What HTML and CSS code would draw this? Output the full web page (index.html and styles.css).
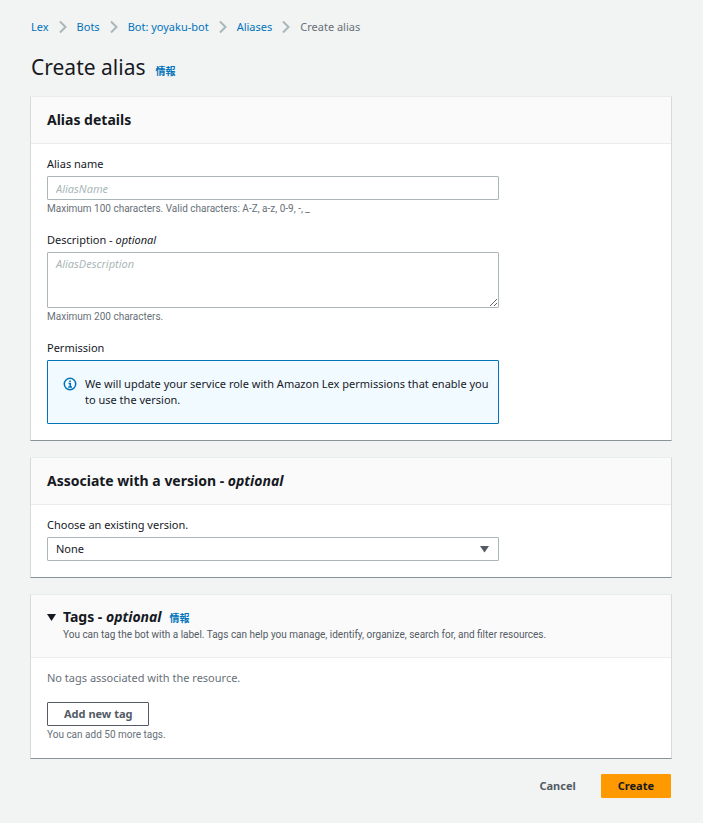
FILE: index.html
```html
<!DOCTYPE html>
<html lang="en">
<head>
<meta charset="utf-8">
<meta name="viewport" content="width=device-width, initial-scale=1">
<title>Create alias</title>
<link rel="stylesheet" href="styles.css">
</head>
<body>
<main class="page">
  <nav class="breadcrumbs" aria-label="Breadcrumbs">
    <a href="#">Lex</a>
    <svg class="chevron" viewBox="0 0 8 14"><path d="M1 1.5 6.5 7 1 12.500"/></svg>
    <a href="#">Bots</a>
    <svg class="chevron" viewBox="0 0 8 14"><path d="M1 1.5 6.5 7 1 12.500"/></svg>
    <a href="#">Bot: yoyaku-bot</a>
    <svg class="chevron" viewBox="0 0 8 14"><path d="M1 1.5 6.5 7 1 12.500"/></svg>
    <a href="#">Aliases</a>
    <svg class="chevron" viewBox="0 0 8 14"><path d="M1 1.5 6.5 7 1 12.500"/></svg>
    <span class="current">Create alias</span>
  </nav>

  <header class="page-title">
    <h1>Create alias</h1>
    <a class="info" href="#" lang="ja">情報</a>
  </header>

  <form class="form">
    <section class="card">
      <div class="card-header"><h2>Alias details</h2></div>
      <div class="card-body">
        <div class="field">
          <label for="alias-name">Alias name</label>
          <input class="control" id="alias-name" type="text" placeholder="AliasName">
          <p class="hint">Maximum 100 characters. Valid characters: A-Z, a-z, 0-9, -, _</p>
        </div>
        <div class="field">
          <label for="description">Description - <em>optional</em></label>
          <textarea class="control area" id="description" placeholder="AliasDescription"></textarea>
          <p class="hint">Maximum 200 characters.</p>
        </div>
        <div class="field">
          <span class="label">Permission</span>
          <div class="alert">
            <svg class="alert-icon" viewBox="0 0 14 14"><circle cx="7" cy="7" r="5.700"/><path d="M5.500 6.500H7.300V9.700M5.200 9.900H9M6.200 4.200H7.800"/></svg>
            <p>We will update your service role with Amazon Lex permissions that enable you to use the version.</p>
          </div>
        </div>
      </div>
    </section>

    <section class="card">
      <div class="card-header"><h2>Associate with a version - <em>optional</em></h2></div>
      <div class="card-body">
        <div class="field">
          <label for="version">Choose an existing version.</label>
          <div class="select-wrap">
            <select class="control" id="version"><option>None</option></select>
            <svg class="select-arrow" viewBox="0 0 10 8"><path d="M1 1H10L5.500 7.500Z"/></svg>
          </div>
        </div>
      </div>
    </section>

    <section class="card">
      <div class="card-header tags-header">
        <button class="toggle" type="button" aria-label="Tags" aria-expanded="true"><svg viewBox="0 0 10 8"><path d="M0 1H9L4.500 8Z"/></svg></button>
        <div>
          <div class="tags-title"><h2>Tags - <em>optional</em></h2><a class="info" href="#" lang="ja">情報</a></div>
          <p class="subtitle">You can tag the bot with a label. Tags can help you manage, identify, organize, search for, and filter resources.</p>
        </div>
      </div>
      <div class="card-body">
        <p class="empty">No tags associated with the resource.</p>
        <button class="button outline" type="button">Add new tag</button>
        <p class="hint">You can add 50 more tags.</p>
      </div>
    </section>

    <div class="actions">
      <button class="button link" type="button">Cancel</button>
      <button class="button primary" type="submit">Create</button>
    </div>
  </form>
</main>
</body>
</html>
```
FILE: styles.css
```css
* { box-sizing: border-box; }

body {
  margin: 0;
  background: #f2f3f3;
  color: #16191f;
  font: 11px/16px "Noto Sans", "Noto Sans CJK JP", sans-serif;
}

h1, h2, p { margin: 0; }
a { color: #0073bb; text-decoration: none; }
input, textarea, select, button { font: inherit; color: inherit; }

.page { padding: 19px 31px 24px 30px; }

.breadcrumbs {
  display: flex;
  flex-wrap: wrap;
  align-items: center;
  gap: 10px;
  padding: 0 1px;
}
.chevron {
  width: 8px;
  height: 14px;
  fill: none;
  stroke: #aab7b8;
  stroke-width: 2;
}
.current { color: #687078; }

.page-title {
  display: flex;
  align-items: baseline;
  gap: 10px;
  margin: 16px 0 13px;
  padding: 0 1px;
}
h1 { font-size: 21px; line-height: 32px; font-weight: 400; }
.info {
  font: 700 10px/16px "Noto Sans CJK JP", sans-serif;
}

.card {
  margin-bottom: 16px;
  background: #fff;
  border: 1px solid #d5dbdb;
  border-top-color: #eaeded;
  border-bottom-color: #879596;
}
.card-header {
  padding: 12px 16px;
  background: #fafafa;
  border-bottom: 1px solid #eaeded;
}
h2 { font-size: 14px; line-height: 22px; font-weight: 700; }
.card-body { padding: 12px 16px 16px; }

.field { max-width: 452px; }
.field + .field { margin-top: 16px; }
.field label, .label { display: block; margin-bottom: 4px; }

.control {
  display: block;
  width: 100%;
  height: 24px;
  margin: 0;
  padding: 3px 8px;
  background: #fff;
  border: 1px solid #aab7b8;
  border-radius: 1px;
}
.area { height: 56px; resize: vertical; }
.control::placeholder { color: #aab7b8; font-style: italic; opacity: 1; }

.hint, .subtitle {
  font-family: Roboto, sans-serif;
  font-size: 10px;
  line-height: 14px;
}
.hint { margin-top: 2px; color: #687078; }
.subtitle { color: #545b64; }

.alert {
  display: flex;
  gap: 8px;
  padding: 15px 4px 15px 15px;
  background: #f1faff;
  border: 1px solid #0073bb;
  border-radius: 1px;
}
.alert-icon {
  flex: none;
  width: 14px;
  height: 14px;
  margin-top: 1px;
  fill: none;
  stroke: #0073bb;
  stroke-width: 1.5;
}

.select-wrap { position: relative; }
.select-wrap select { appearance: none; }
.select-arrow {
  position: absolute;
  top: 8px;
  right: 10px;
  width: 10px;
  height: 8px;
  fill: #545b64;
  pointer-events: none;
}

.tags-header { display: flex; gap: 6px; padding: 11px 16px 15px; }
.toggle {
  flex: none;
  width: 10px;
  height: 22px;
  padding: 0;
  border: 0;
  background: none;
}
.toggle svg { display: block; width: 10px; height: 8px; fill: #16191f; }
.tags-title { display: flex; align-items: baseline; gap: 8px; }

.empty { margin-bottom: 16px; color: #687078; }

.button {
  display: block;
  height: 24px;
  padding: 0 16px;
  border: 1px solid transparent;
  border-radius: 1px;
  background: none;
  font-weight: 700;
  line-height: 16px;
  color: #545b64;
}
.outline { background: #fff; border-color: #545b64; }
.primary { background: #ff9900; border-color: #ff9900; color: #16191f; }

.actions {
  display: flex;
  justify-content: flex-end;
  gap: 8px;
  margin-top: -1px;
  padding-right: 1px;
}
```
